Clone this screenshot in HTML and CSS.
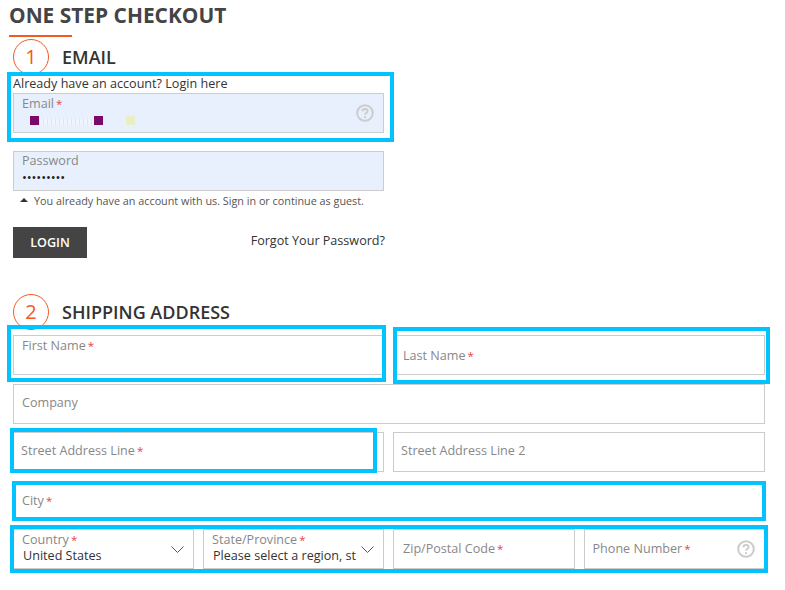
FILE: index.html
```html
<!DOCTYPE html>
<html lang="en">
<head>
<meta charset="utf-8">
<title>One Step Checkout</title>
<link rel="stylesheet" href="styles.css">
</head>
<body>
<main class="page">
  <header class="page-head">
    <h1 class="page-title">ONE STEP CHECKOUT</h1>
  </header>

  <section class="step step-email">
    <div class="step-head">
      <span class="step-num">1</span>
      <h2 class="step-title">EMAIL</h2>
    </div>
    <p class="login-link">Already have an account? Login here</p>
    <div class="field field-filled field-email">
      <span class="label">Email<i class="req">*</i></span>
      <div class="noise">
        <span class="px px-dark"></span>
        <span class="px-faint"></span>
        <span class="px px-dark"></span>
        <span class="px-gap"></span>
        <span class="px px-pale"></span>
      </div>
      <svg class="help" viewBox="0 0 18 18" aria-hidden="true"><circle cx="9" cy="9" r="7.8"/><path d="M6.4 7.2C6.5 5.6 7.6 4.9 9 4.9c1.5 0 2.6.9 2.6 2.1 0 1-.6 1.5-1.4 2-.8.5-1.1.9-1.1 1.7"/><path class="dot" d="M8 12.2h2v1.9H8z"/></svg>
    </div>
    <div class="field field-filled field-password">
      <span class="label">Password</span>
      <span class="dots">•••••••••</span>
    </div>
    <p class="note"><span class="note-arrow"></span>You already have an account with us. Sign in or continue as guest.</p>
    <div class="login-row">
      <button class="login-btn" type="button">LOGIN</button>
      <span class="forgot">Forgot Your Password?</span>
    </div>
  </section>

  <section class="step step-shipping">
    <div class="step-head">
      <span class="step-num">2</span>
      <h2 class="step-title">SHIPPING ADDRESS</h2>
    </div>
    <div class="form-rows">
      <div class="two split">
        <div class="field field-top"><span class="label">First Name<i class="req">*</i></span></div>
        <div class="field"><span class="label label-in">Last Name<i class="req">*</i></span></div>
      </div>
      <div class="field up4"><span class="label">Company</span></div>
      <div class="two split">
        <div class="field up4"><span class="label label-street">Street Address Line<i class="req">*</i></span></div>
        <div class="field up4"><span class="label label-street">Street Address Line 2</span></div>
      </div>
      <div class="field up2"><span class="label">City<i class="req">*</i></span></div>
      <div class="two split">
        <div class="two">
          <div class="field field-select">
            <span class="label">Country<i class="req">*</i></span>
            <span class="value">United States</span>
            <svg class="chev" viewBox="0 0 13 7" aria-hidden="true"><path d="M.5.5l6 6 6-6"/></svg>
          </div>
          <div class="field field-select">
            <span class="label">State/Province<i class="req">*</i></span>
            <span class="value">Please select a region, st</span>
            <svg class="chev" viewBox="0 0 13 7" aria-hidden="true"><path d="M.5.5l6 6 6-6"/></svg>
          </div>
        </div>
        <div class="two">
          <div class="field up2"><span class="label label-in">Zip/Postal Code<i class="req">*</i></span></div>
          <div class="field up2">
            <span class="label">Phone Number<i class="req">*</i></span>
            <svg class="help" viewBox="0 0 18 18" aria-hidden="true"><circle cx="9" cy="9" r="7.8"/><path d="M6.4 7.2C6.5 5.6 7.6 4.9 9 4.9c1.5 0 2.6.9 2.6 2.1 0 1-.6 1.5-1.4 2-.8.5-1.1.9-1.1 1.7"/><path class="dot" d="M8 12.2h2v1.9H8z"/></svg>
          </div>
        </div>
      </div>
    </div>
  </section>

  <div class="mark mark-email"></div>
  <div class="mark mark-first"></div>
  <div class="mark mark-last"></div>
  <div class="mark mark-street"></div>
  <div class="mark mark-city"></div>
  <div class="mark mark-row"></div>
</main>
</body>
</html>
```

FILE: styles.css
```css
* { box-sizing: border-box; }
html, body { margin: 0; padding: 0; background: #fff; }
body { font-family: "Open Sans", sans-serif; color: #333; font-size: 13px; }

.page { position: relative; width: 785px; height: 590px; overflow: hidden; padding: 0 20px 0 13px; }

.page-head { margin-left: -4px; height: 37px; padding-top: 2px; position: relative; }
.page-title { margin: 0; font-size: 20.9px; line-height: 27px; font-weight: 700; color: #444; }
.page-head::after { content: ""; position: absolute; left: 0; bottom: 0; width: 63px; height: 2px; background: #f15a22; }

.step-head { display: flex; align-items: center; gap: 12px; height: 36px; }
.step-num { width: 36px; height: 36px; border: 1px solid #f15a22; border-radius: 50%; color: #f15a22; font-size: 20px; line-height: 34px; text-align: center; background: #fff; }
.step-title { margin: 0 0 0 1px; font-size: 18px; line-height: 24px; font-weight: 600; color: #333; }

.step-email { margin-top: 2px; }
.login-link { margin: 0 0 1px; height: 17px; line-height: 17px; font-size: 12.6px; color: #333; }

.field { position: relative; display: flex; flex-direction: column; justify-content: center; height: 40px; padding: 0 8px; border: 1px solid #ccc; background: #fff; min-width: 0; }
.label { font-size: 12.6px; line-height: 18px; height: 19px; padding-top: 1px; margin-bottom: -1px; color: #888; white-space: nowrap; flex: none; }
.label-street { margin-left: -1px; }
.label-in { margin-left: 1px; }
.req { font-style: normal; font-size: 11.5px; color: #e8434a; margin-left: 2px; }
.up2 { padding-bottom: 2px; }
.up4 { padding-bottom: 4px; }

.field-filled, .field-top, .field-select { justify-content: flex-start; padding-top: 0; }
.field-filled { background: #e8f0fe; }
.step-email .field { width: 371px; }
.field-password { margin-top: 18px; }
.field-password .label { margin-top: -1px; margin-bottom: 0; }
.dots { font-size: 13px; line-height: 12px; color: #222; letter-spacing: -0.1px; margin-top: 1px; }

.noise { display: flex; height: 9px; margin-top: 4px; padding-left: 8px; align-items: flex-end; }
.px { display: block; flex: none; width: 9px; height: 9px; }
.px-dark { background: #7a0a6a; }
.px-pale { background: #e9efc2; }
.px-faint { flex: none; width: 55px; height: 6px; background: repeating-linear-gradient(90deg, #dfe4f1 0 1px, #f0f4fc 1px 4px); }
.px-gap { flex: none; width: 23px; }

.help { position: absolute; right: 9px; top: 50%; width: 18px; height: 18px; transform: translateY(-50%); fill: none; stroke: #ccc; stroke-width: 2; }
.help .dot { fill: #ccc; stroke: none; }

.note { margin: 2px 0 0 21px; font-size: 10.8px; line-height: 15px; color: #555; position: relative; }
.note-arrow { position: absolute; left: -14px; top: 5px; width: 0; height: 0; border-left: 4px solid transparent; border-right: 4px solid transparent; border-bottom: 4px solid #333; }

.login-row { display: flex; justify-content: space-between; align-items: flex-start; width: 372px; margin-top: 19px; }
.login-btn { width: 74px; height: 31px; border: 0; padding: 0; background: #444; color: #fff; font: 600 12.6px/31px "Open Sans", sans-serif; }
.forgot { font-size: 12.6px; line-height: 18px; margin-top: 5px; color: #333; }

.step-shipping { margin-top: 36px; }
.form-rows { display: flex; flex-direction: column; gap: 8.5px; margin-top: 5px; width: 752px; }
.two { display: grid; grid-template-columns: 1fr 1fr; gap: 9px; min-width: 0; }
.split { grid-template-columns: 371px 372px; }

.field-select .value { font-size: 12.6px; line-height: 15px; color: #333; margin-left: 1px; white-space: nowrap; overflow: hidden; }
.chev { position: absolute; right: 9px; top: 16px; width: 13px; height: 7px; fill: none; stroke: #555; stroke-width: 1; }

.mark { position: absolute; border: 4px solid #00c3ff; pointer-events: none; }
.mark-email { left: 7px; top: 72px; width: 387px; height: 70px; }
.mark-first { left: 7px; top: 325px; width: 379px; height: 57px; }
.mark-last { left: 393px; top: 327px; width: 377px; height: 57px; }
.mark-street { left: 10px; top: 428px; width: 367px; height: 45px; }
.mark-city { left: 12px; top: 481px; width: 754px; height: 40px; }
.mark-row { left: 10px; top: 525px; width: 758px; height: 48px; }
```
